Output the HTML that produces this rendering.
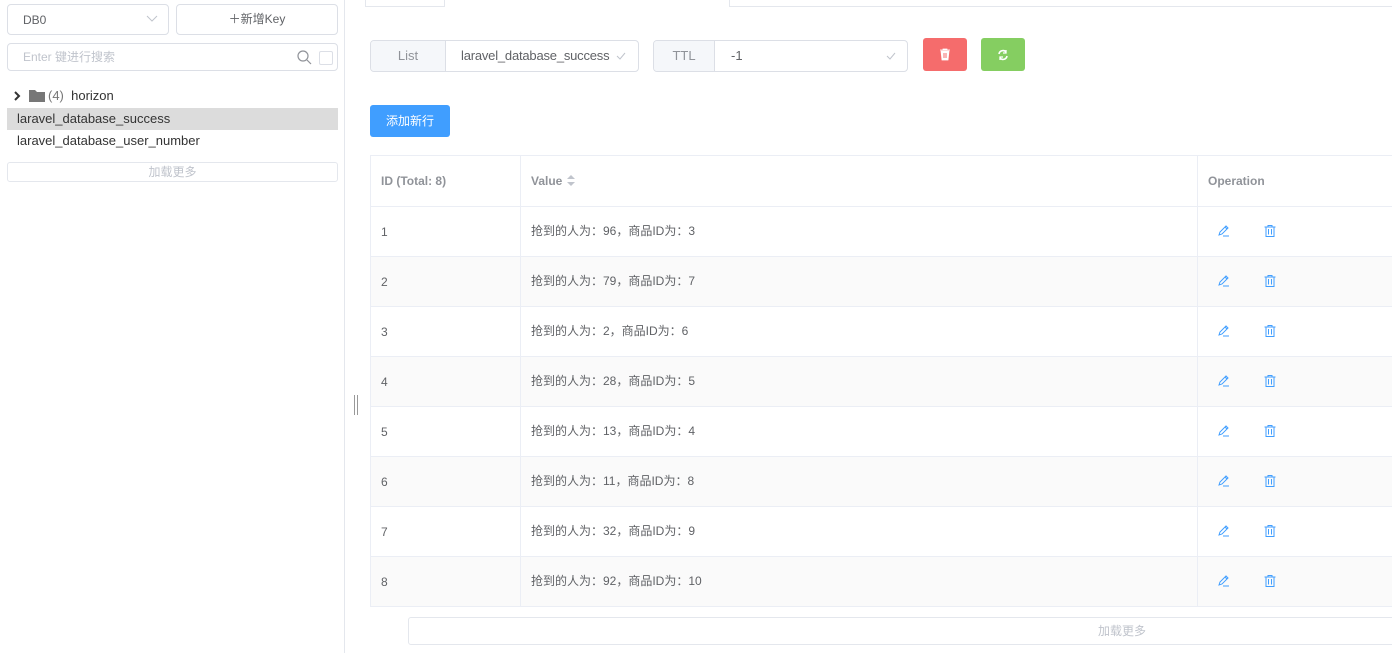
<!DOCTYPE html>
<html><head><meta charset="utf-8"><style>
*{box-sizing:border-box;margin:0;padding:0}
body{width:1392px;height:653px;overflow:hidden;background:#fff;font-family:"Liberation Sans","Noto Sans CJK SC",sans-serif;color:#606266;position:relative}
.a{position:absolute}
.bx{border:1px solid #dcdfe6;border-radius:4px;background:#fff}
.c{line-height:14px;height:14px}
</style></head><body>
<div class="a bx" style="left:7px;top:4px;width:162px;height:31px;font-size:12px;color:#606266;padding:8px 15px">DB0
<svg class="a" style="left:138px;top:10px" width="12" height="8"><path d="M1 1l5 5 5-5" stroke="#c0c4cc" fill="none"/></svg></div>
<div class="a bx" style="left:176px;top:4px;width:162px;height:31px;font-size:12px;text-align:center;line-height:29px;color:#606266">＋新增Key</div>
<div class="a bx" style="left:7px;top:43px;width:331px;height:28px;font-size:12px;color:#c0c4cc;padding:6px 15px;line-height:14px">Enter 键进行搜索
<svg class="a" style="left:288px;top:5px" width="16" height="16"><circle cx="7" cy="7" r="5" stroke="#909399" fill="none" stroke-width="1.2"/><path d="M11 11l4 4" stroke="#909399" stroke-width="1.2"/></svg>
<div class="a" style="left:311px;top:7px;width:14px;height:14px;border:1px solid #dcdfe6;border-radius:2px"></div></div>
<svg class="a" style="left:13px;top:91px" width="10" height="10"><path d="M2 1l4 4-4 4" stroke="#333" stroke-width="2" fill="none"/></svg>
<svg class="a" style="left:29px;top:89px" width="16" height="13"><path d="M0 1h6l2 2h8v10H0z" fill="#777"/></svg>
<div class="a" style="left:48px;top:88px;font-size:13px;color:#333"><span style="color:#777">(4)</span>&nbsp; horizon</div>
<div class="a" style="left:7px;top:108px;width:331px;height:22px;background:#dcdcdc"></div>
<div class="a" style="left:17px;top:111px;font-size:13px;color:#333">laravel_database_success</div>
<div class="a" style="left:17px;top:133px;font-size:13px;color:#333">laravel_database_user_number</div>
<div class="a" style="left:7px;top:162px;width:331px;height:20px;border:1px solid #e4e7ed;border-radius:3px;text-align:center;font-size:12px;line-height:18px;color:#c0c4cc">加载更多</div>
<div class="a" style="left:344px;top:0;width:1px;height:653px;background:#e4e7ed"></div>
<div class="a" style="left:354px;top:395px;width:1px;height:20px;background:#999"></div>
<div class="a" style="left:357px;top:395px;width:1px;height:20px;background:#999"></div>
<div class="a" style="left:365px;top:-1px;width:80px;height:8px;border:1px solid #e4e7ed;border-top:none"></div>
<div class="a" style="left:729px;top:-1px;width:680px;height:8px;border:1px solid #e4e7ed;border-top:none"></div>
<div class="a bx" style="left:370px;top:40px;width:269px;height:32px;overflow:hidden">
<div class="a" style="left:0;top:0;width:75px;height:30px;background:#f5f7fa;border-right:1px solid #dcdfe6;text-align:center;line-height:30px;font-size:13px;color:#909399">List</div>
<div class="a" style="left:90px;top:0;line-height:30px;font-size:13px;color:#606266;letter-spacing:-0.2px">laravel_database_success</div>
<svg class="a" style="left:245px;top:11px" width="10" height="8"><path d="M1 4l3 3 5-6" stroke="#c0c4cc" fill="none"/></svg></div>
<div class="a bx" style="left:653px;top:40px;width:255px;height:32px;overflow:hidden">
<div class="a" style="left:0;top:0;width:61px;height:30px;background:#f5f7fa;border-right:1px solid #dcdfe6;text-align:center;line-height:30px;font-size:13px;color:#909399">TTL</div>
<div class="a" style="left:77px;top:0;line-height:30px;font-size:13px;color:#606266">-1</div>
<svg class="a" style="left:232px;top:11px" width="10" height="8"><path d="M1 4l3 3 5-6" stroke="#c0c4cc" fill="none"/></svg></div>
<div class="a" style="left:923px;top:38px;width:44px;height:33px;background:#f56c6c;border-radius:3px">
<svg class="a" style="left:16px;top:10px" width="12" height="13"><path d="M1 2h10M4 2V1h4v1M2 3h8l-1 9H3z" fill="#fff" stroke="#fff" stroke-width=".8"/><path d="M5 5v5M7 5v5" stroke="#f56c6c"/></svg></div>
<div class="a" style="left:981px;top:38px;width:44px;height:33px;background:#85ce61;border-radius:3px">
<svg class="a" style="left:16px;top:11px" width="12" height="12"><path d="M2 5a4 4 0 0 1 7-2M10 7a4 4 0 0 1-7 2" stroke="#fff" stroke-width="1.6" fill="none"/><path d="M9 1v3H6M3 11V8h3" stroke="#fff" stroke-width="1.3" fill="none"/></svg></div>
<div class="a" style="left:370px;top:105px;width:80px;height:32px;background:#409eff;border-radius:3px;color:#fff;font-size:12px;text-align:center;line-height:32px">添加新行</div>
<div class="a" style="left:370px;top:155px;width:1030px;height:452px;border:1px solid #ebeef5"></div>
<div class="a" style="left:520px;top:155px;width:1px;height:452px;background:#ebeef5"></div>
<div class="a" style="left:1197px;top:155px;width:1px;height:452px;background:#ebeef5"></div>
<div class="a" style="left:381px;top:174px;font-size:12px;font-weight:bold;color:#909399">ID (Total: 8)</div>
<div class="a" style="left:531px;top:174px;font-size:12px;font-weight:bold;color:#909399">Value <span style="display:inline-block;vertical-align:-2px"><svg width="10" height="13"><path d="M1 5l4-4 4 4z M1 8l4 4 4-4z" fill="#c0c4cc"/></svg></span></div>
<div class="a" style="left:1208px;top:174px;font-size:12px;font-weight:bold;color:#909399">Operation</div>
<div id="rows"></div>
<script>
var v=[[96,3],[79,7],[2,6],[28,5],[13,4],[11,8],[32,9],[92,10]],h='';
v.forEach(function(r,i){var t=206+i*50;
if(i%2)h+='<div class="a" style="left:371px;top:'+t+'px;width:1021px;height:50px;background:#fafafa"></div><div class="a" style="left:520px;top:'+t+'px;width:1px;height:50px;background:#ebeef5"></div><div class="a" style="left:1197px;top:'+t+'px;width:1px;height:50px;background:#ebeef5"></div>';
h+='<div class="a" style="left:370px;top:'+t+'px;width:1030px;height:1px;background:#ebeef5"></div>';
h+='<div class="a c" style="left:381px;top:'+(t+19)+'px;font-size:12px">'+(i+1)+'</div>';
h+='<div class="a c" style="left:531px;top:'+(t+18)+'px;font-size:12px">抢到的人为：'+r[0]+'，商品ID为：'+r[1]+'</div>';
h+='<svg class="a" style="left:1217px;top:'+(t+18)+'px" width="14" height="14"><path d="M2 11l1-3 6-6 2 2-6 6zM8 3l2 2M6 12h6" stroke="#409eff" fill="none"/></svg>';
h+='<svg class="a" style="left:1263px;top:'+(t+18)+'px" width="14" height="14"><path d="M1.5 3h11M5 3V1.5h4V3M3 3v9.5h8V3M5.5 5v5.5M8.5 5v5.5" stroke="#409eff" fill="none"/></svg>';});
document.getElementById('rows').innerHTML=h;
</script>
<div class="a" style="left:408px;top:617px;width:1000px;height:28px;border:1px solid #e4e7ed;border-radius:3px"></div>
<div class="a c" style="left:1098px;top:624px;font-size:12px;color:#c0c4cc">加载更多</div>
</body></html>
